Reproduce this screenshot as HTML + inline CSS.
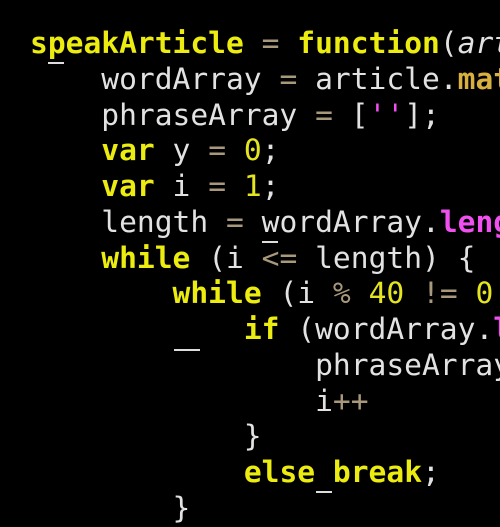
<!DOCTYPE html>
<html><head><style>
html,body{margin:0;padding:0;background:#000;width:500px;height:500px;overflow:hidden}
pre{position:absolute;left:30px;top:26px;margin:0;font-family:"DejaVu Sans Mono","Liberation Mono",monospace;font-size:29.6px;line-height:35.75px;color:#e2e2e2;white-space:pre}
.k{color:#ecec10;font-weight:bold}
.n{color:#e4e420}
.o{color:#a8987c}
.p{color:#f050f0;font-weight:bold}
.m{color:#d8b040;font-weight:bold}
.i{font-style:italic}
.u{position:absolute;height:2px;background:#ddd}
</style></head><body>
<pre><span class="k">speakArticle</span> <span class="o">=</span> <span class="k">function</span>(<span class="i">art</span>
    wordArray <span class="o">=</span> article.<span class="m">mat</span>
    phraseArray <span class="o">=</span> [<span class="p" style="font-weight:normal">''</span>];
    <span class="k">var</span> y <span class="o">=</span> <span class="n">0</span>;
    <span class="k">var</span> i <span class="o">=</span> <span class="n">1</span>;
    length <span class="o">=</span> wordArray.<span class="p">leng</span>
    <span class="k">while</span> (i <span class="o">&lt;=</span> length) {
        <span class="k">while</span> (i <span class="o">%</span> <span class="n">40</span> <span class="o">!=</span> <span class="n">0</span>
            <span class="k">if</span> (wordArray.<span class="p">l</span>
                phraseArray
                i<span class="o">++</span>
            }
            <span class="k">else</span> <span class="k">break</span>;
        }</pre>
<div class="u" style="left:48px;top:62px;width:16px"></div>
<div class="u" style="left:262px;top:241px;width:16px"></div>
<div class="u" style="left:174px;top:349px;width:26px"></div>
<div class="u" style="left:316px;top:491px;width:16px"></div>
</body></html>
